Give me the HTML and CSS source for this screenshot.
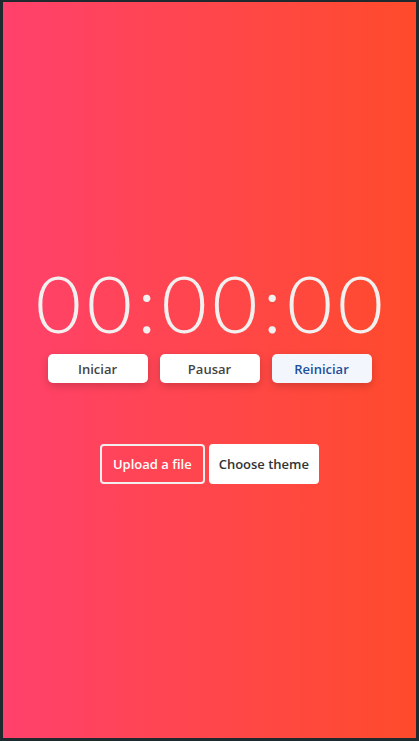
FILE: index.html
```html
<!DOCTYPE html>
<html lang="pt">
<head>
    <meta charset="UTF-8">
    <meta name="viewport" content="width=device-width, initial-scale=1.0">
    <title>Cronômetro</title>
    <link rel="stylesheet" href="styles.css">
</head>
<body>
    <div class="app">
        <div class="stopwatch">
            <div class="time" id="display"><span class="seg">00</span><span class="sep">:</span><span class="seg">00</span><span class="sep">:</span><span class="seg">00</span></div>
            <div class="controls">
                <button class="btn" id="start">Iniciar</button>
                <button class="btn" id="pause">Pausar</button>
                <button class="btn btn-reset" id="reset">Reiniciar</button>
            </div>
        </div>

        <div class="extras">
            <label class="upload">Upload a file<input type="file" hidden></label>
            <button class="theme">Choose theme</button>
        </div>
    </div>
</body>
</html>
```

FILE: styles.css
```css
* {
    box-sizing: border-box;
}

html, body {
    height: 100%;
}

body {
    margin: 0;
    font-family: 'Open Sans', 'Noto Sans', sans-serif;
    background-color: #1f2a2f;
    padding: 2px 3px 3px 3px;
}

.app {
    height: 100%;
    background: linear-gradient(to right, #ff416c, #ff4b2b);
    padding-top: 261px;
    text-align: center;
}

.time {
    font-family: 'Lato', sans-serif;
    font-size: 79px;
    font-weight: 300;
    line-height: 1;
    color: #f3f0f0;
    white-space: nowrap;
    letter-spacing: 5px;
    padding-left: 5px;
}

.controls {
    display: flex;
    justify-content: center;
    gap: 12px;
    margin-top: 12px;
}

.btn {
    width: 100px;
    height: 29px;
    border: none;
    border-radius: 5px;
    background: white;
    color: #444;
    font-family: inherit;
    font-size: 13px;
    font-weight: 600;
    box-shadow: 0 3px 8px rgba(0,0,0,0.18);
    cursor: pointer;
}

.btn-reset {
    background: #f3f7fd;
    color: #1d4f9c;
}

.extras {
    margin-top: 61px;
    display: flex;
    justify-content: center;
    gap: 4px;
}

.upload, .theme {
    height: 40px;
    padding: 0 10px;
    border-radius: 4px;
    font-family: inherit;
    font-size: 13px;
    font-weight: 600;
    display: flex;
    align-items: center;
    cursor: pointer;
}

.upload {
    border: 2px solid #f2eeee;
    padding: 0 11px;
    color: white;
}

.theme {
    border: none;
    background: white;
    color: #333;
}
```
